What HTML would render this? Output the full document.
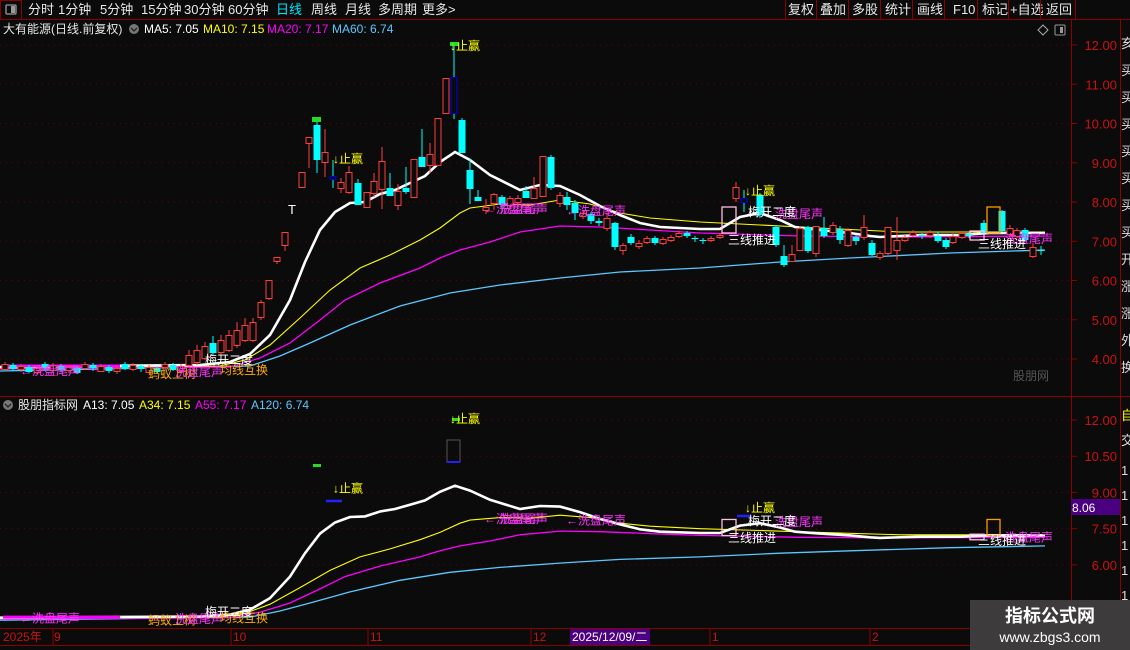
<!DOCTYPE html>
<html><head><meta charset="utf-8"><style>
*{margin:0;padding:0}
body{width:1130px;height:650px;background:#0b0b0b;overflow:hidden;font-family:"Liberation Sans","Noto Sans CJK SC",sans-serif;position:relative}
svg{position:absolute;left:0;top:0}
text{font-family:"Liberation Sans","Noto Sans CJK SC",sans-serif}
</style></head><body>
<svg id="s" width="1130" height="650" xmlns="http://www.w3.org/2000/svg">
<rect width="1130" height="650" fill="#0b0b0b"/>
<!-- toolbar -->
<g font-size="13" fill="#e8e8e8">
<rect x="0.5" y="0.5" width="21" height="19" fill="none" stroke="#8b0000"/>
<rect x="6" y="5" width="10" height="9" rx="1" fill="none" stroke="#999" stroke-width="1.3"/><rect x="11" y="6" width="4" height="7" fill="#999"/>
<text x="28" y="14">分时</text><text x="58" y="14">1分钟</text><text x="100" y="14">5分钟</text><text x="141" y="14">15分钟</text><text x="184" y="14">30分钟</text><text x="228" y="14">60分钟</text>
<text x="276" y="14" fill="#00e5ff">日线</text><text x="311" y="14">周线</text><text x="345" y="14">月线</text><text x="378" y="14">多周期</text><text x="422" y="14">更多&gt;</text>
<text x="788" y="14">复权</text><text x="820" y="14">叠加</text><text x="852" y="14">多股</text><text x="885" y="14">统计</text><text x="917" y="14">画线</text><text x="953" y="14">F10</text><text x="982" y="14">标记</text><text x="1010" y="14">+自选</text><text x="1046" y="14">返回</text>
</g>
<g stroke="#8b0000"><line x1="0" y1="19.5" x2="1130" y2="19.5"/>
<line x1="785.5" y1="0" x2="785.5" y2="19"/><line x1="816.5" y1="0" x2="816.5" y2="19"/><line x1="848.5" y1="0" x2="848.5" y2="19"/><line x1="880.5" y1="0" x2="880.5" y2="19"/><line x1="912.5" y1="0" x2="912.5" y2="19"/><line x1="944.5" y1="0" x2="944.5" y2="19"/><line x1="977.5" y1="0" x2="977.5" y2="19"/><line x1="1008.5" y1="0" x2="1008.5" y2="19"/><line x1="1040.5" y1="0" x2="1040.5" y2="19"/><line x1="1075.5" y1="0" x2="1075.5" y2="19"/>
<line x1="1071.5" y1="19" x2="1071.5" y2="645"/><line x1="1120.5" y1="19" x2="1120.5" y2="628"/>
<line x1="0" y1="396.5" x2="1130" y2="396.5"/><line x1="0" y1="628.5" x2="1130" y2="628.5"/><line x1="0" y1="645.5" x2="1130" y2="645.5"/>
</g>
<g id="grid"></g>
<g id="axis" font-size="13" fill="#cc1111" text-anchor="end"></g>
<!-- headers -->
<g font-size="12">
<text x="3" y="33" fill="#e8e8e8">大有能源(日线.前复权)</text>
<circle cx="134" cy="29" r="5" fill="#777"/><path d="M131 28l3 3 3-3" stroke="#222" fill="none" stroke-width="1.3"/>
<text x="144" y="33" fill="#fff">MA5: 7.05</text><text x="203" y="33" fill="#ffff00">MA10: 7.15</text><text x="267" y="33" fill="#ff00ff">MA20: 7.17</text><text x="332" y="33" fill="#5bc8ff">MA60: 6.74</text>
<circle cx="8" cy="405" r="5" fill="#777"/><path d="M5 404l3 3 3-3" stroke="#222" fill="none" stroke-width="1.3"/>
<text x="18" y="409" fill="#e8e8e8">股朋指标网</text>
<text x="83" y="409" fill="#fff">A13: 7.05</text><text x="139" y="409" fill="#ffff00">A34: 7.15</text><text x="195" y="409" fill="#ff00ff">A55: 7.17</text><text x="251" y="409" fill="#5bc8ff">A120: 6.74</text>
</g>
<path d="M1043 25l5 5-5 5-5-5z" fill="none" stroke="#aaa"/>
<rect x="1055" y="25" width="10" height="10" rx="1" fill="none" stroke="#999"/><rect x="1060" y="27" width="3" height="6" fill="#999"/>
<g id="lines" fill="none"></g>
<g id="cand"></g>
<g id="labels" font-size="12"></g>
<!-- 8.06 marker -->
<rect x="1071" y="499" width="49" height="16" fill="#4b0082"/><text x="1072" y="512" font-size="12" fill="#fff">8.06</text>
<!-- right column -->
<g font-size="13" fill="#ddd"><text x="1121" y="48">亥</text><text x="1121" y="75">买</text><text x="1121" y="102">买</text><text x="1121" y="129">买</text><text x="1121" y="156">买</text><text x="1121" y="183">买</text><text x="1121" y="210">买</text><text x="1121" y="237">买</text><text x="1121" y="264">开</text><text x="1121" y="291">涨</text><text x="1121" y="318">涨</text><text x="1121" y="345">外</text><text x="1121" y="372">换</text>
<text x="1121" y="420" fill="#ff0">自</text><text x="1121" y="445">交</text>
<text x="1121" y="475">1</text><text x="1121" y="500">1</text><text x="1121" y="525">1</text><text x="1121" y="550">1</text><text x="1121" y="575">1</text><text x="1121" y="600">1</text></g>
<!-- date axis -->
<g font-size="12" fill="#cc1111"><text x="3" y="641">2025年</text><text x="54" y="641">9</text><text x="233" y="641">10</text><text x="370" y="641">11</text><text x="533" y="641">12</text><text x="712" y="641">1</text><text x="872" y="641">2</text></g>
<g stroke="#8b0000"><line x1="53" y1="629" x2="53" y2="645"/><line x1="231" y1="629" x2="231" y2="645"/><line x1="368" y1="629" x2="368" y2="645"/><line x1="531" y1="629" x2="531" y2="645"/><line x1="710" y1="629" x2="710" y2="645"/><line x1="870" y1="629" x2="870" y2="645"/></g>
<rect x="570" y="629" width="80" height="16" fill="#4b0082"/><text x="572" y="641" font-size="12" fill="#fff">2025/12/09/二</text>
<!-- watermark -->
<rect x="970" y="600" width="160" height="50" fill="#3d3b3b"/>
<text x="1050" y="622" font-size="18" font-weight="bold" fill="#fff" text-anchor="middle">指标公式网</text>
<text x="1050" y="642" font-size="14" fill="#fff" text-anchor="middle">www.zbgs3.com</text>
</svg>
<script>
var NS="http://www.w3.org/2000/svg";
function el(p,t,a,txt){var e=document.createElementNS(NS,t);for(var k in a)e.setAttribute(k,a[k]);if(txt)e.textContent=txt;document.getElementById(p).appendChild(e);return e;}
function Y1(p){return 45+(12-p)*39.25;}
function Y2(p){return 420+(12-p)*24.15;}
function L(y){return 420+(y-45)*0.614;}
// grid + axis
for(var p=4;p<=12;p++){var y=Y1(p);el('grid','line',{x1:0,x2:1070,y1:y,y2:y,stroke:'#6a0000','stroke-dasharray':'1 5'});el('axis','text',{x:1117,y:y+5},p.toFixed(2));el('grid','line',{x1:1071,x2:1077,y1:y,y2:y,stroke:'#8b0000'});}
[12,10.5,9,7.5,6].forEach(function(p){var y=Y2(p);el('grid','line',{x1:0,x2:1070,y1:y,y2:y,stroke:'#6a0000','stroke-dasharray':'1 5'});el('axis','text',{x:1117,y:y+5},p.toFixed(2));el('grid','line',{x1:1071,x2:1077,y1:y,y2:y,stroke:'#8b0000'});});
// MA lines (upper px)
var W=[[0,367],[200,365],[230,362],[250,354],[270,335],[290,300],[305,262],[320,230],[335,212],[350,203],[365,202],[380,194],[395,190],[410,183],[425,176],[440,162],[455,152],[470,160],[490,175],[520,190],[540,185],[560,186],[580,195],[600,206],[620,215],[640,223],[660,227],[700,229],[720,229],[740,217],[760,213],[780,220],[795,227],[820,230],[850,233],[870,236],[880,237],[920,235],[960,235],[990,233],[1045,233]];
var Yl=[[0,368],[220,366],[245,360],[270,345],[300,318],[330,290],[360,268],[390,255],[420,240],[440,228],[460,213],[470,208],[500,204],[530,205],[560,200],[590,204],[620,213],[650,218],[700,222],[760,225],[820,228],[900,232],[1045,232]];
var Mg=[[0,369],[230,367],[260,358],[290,343],[320,320],[345,300],[380,283],[420,268],[440,258],[460,250],[490,242],[520,232],[560,226],[600,227],[650,230],[700,233],[800,236],[900,237],[1045,236]];
var Bl=[[0,371],[250,366],[280,356],[310,343],[350,325],[400,306],[450,293],[500,285],[560,278],[620,272],[700,268],[780,262],[850,258],[950,253],[1045,250]];
function pl(a,f){return a.map(function(q){return q[0]+','+(f?L(q[1]):q[1]).toFixed(1)}).join(' ');}
[[Bl,'#5bc8ff',1.3],[Mg,'#ff00ff',1.3],[Yl,'#ffff00',1.1],[W,'#ffffff',2.6]].forEach(function(m){el('lines','polyline',{points:pl(m[0]),stroke:m[1],'stroke-width':m[2]});el('lines','polyline',{points:pl(m[0],1),stroke:m[1],'stroke-width':m[2]});});
// candles [x, top, bottom, wickTop, wickBot, type] type r=red hollow c=cyan b=blue box
var C=[];
for(var x=5;x<185;x+=8){var t=364+((x*7)%5);C.push([x,t,t+3+(x%3),t-2,t+6,(x%16<8)?'r':'c']);}
C=C.concat([[189,355,365,350,367,'r'],[197,350,362,345,365,'r'],[205,346,358,342,360,'r'],[213,343,353,336,356,'c'],[221,340,352,335,355,'r'],[229,335,350,330,352,'r'],[237,330,345,322,348,'r'],[245,325,340,318,342,'r'],[253,322,340,318,342,'r'],[261,302,317,300,320,'r'],[269,280,298,280,300,'r'],[277,257,261,257,264,'r'],[285,232,245,232,251,'r'],[302,172,187,172,187,'r'],[309,137,143,137,168,'r'],[317,125,160,121,173,'c'],[325,152,162,129,177,'r'],[333,176,179,160,188,'b'],[341,182,188,178,193,'r'],[349,172,192,166,194,'r'],[358,183,205,179,205,'c'],[367,192,207,192,208,'r'],[374,181,193,173,197,'r'],[382,161,189,147,209,'r'],[390,188,196,173,196,'c'],[398,191,205,184,210,'r'],[406,188,192,167,194,'c'],[414,159,197,159,197,'r'],[422,157,167,129,167,'c'],[430,154,165,143,173,'r'],[438,118,165,118,165,'r'],[446,78,113,78,113,'r'],[454,77,113,44,119,'b'],[462,120,153,118,153,'c'],[470,170,189,159,204,'c'],[478,197,201,190,201,'c'],[486,207,210,199,214,'r'],[494,194,203,193,210,'r'],[502,197,205,195,210,'c'],[510,198,205,196,209,'r'],[518,198,202,195,205,'r'],[526,191,198,186,198,'c'],[534,188,198,177,198,'r'],[543,156,196,156,196,'r'],[551,157,188,155,190,'c'],[560,195,203,192,207,'r'],[567,197,205,192,210,'c'],[575,203,213,200,220,'c'],[583,213,216,210,219,'r'],[591,214,221,212,224,'c'],[599,221,223,218,226,'c'],[607,218,228,214,231,'r'],[615,223,247,222,250,'c'],[623,245,250,243,255,'r'],[631,237,243,234,245,'c'],[639,243,246,240,249,'r'],[647,238,242,236,244,'r'],[655,238,243,236,245,'c'],[663,239,243,237,245,'r'],[671,237,240,235,242,'r'],[679,233,236,231,238,'r'],[687,233,236,231,238,'c'],[695,238,239,236,242,'c'],[703,240,241,238,244,'c'],[711,238,240,236,242,'r'],[720,235,237,233,239,'r'],[736,187,198,182,202,'r'],[744,198,202,190,212,'b'],[760,195,215,193,218,'c'],[776,227,245,225,247,'c'],[784,256,265,245,267,'c'],[792,254,261,245,262,'r'],[800,228,250,226,250,'r'],[808,227,251,226,253,'c'],[816,226,253,226,257,'r'],[824,228,236,217,238,'c'],[833,225,232,222,235,'r'],[840,229,240,226,244,'c'],[848,230,245,228,247,'r'],[856,237,241,235,245,'c'],[864,227,237,215,240,'r'],[872,243,255,240,256,'c'],[880,253,257,251,260,'r'],[888,227,253,227,255,'r'],[897,240,250,217,260,'r'],[905,237,240,235,242,'r'],[913,232,235,230,237,'r'],[922,235,236,233,239,'c'],[930,232,235,230,238,'r'],[938,236,241,232,243,'c'],[946,240,247,238,249,'c'],[953,236,242,233,244,'r'],[962,233,237,231,239,'r'],[969,234,236,232,238,'c'],[984,223,233,220,236,'c'],[1002,211,231,210,232,'c'],[1010,228,234,225,238,'r'],[1017,230,236,228,238,'r'],[1025,230,240,228,242,'c'],[1033,247,256,243,258,'r'],[1041,250,251,246,255,'c']]);
C.forEach(function(c){var x=c[0],col=c[5]=='r'?'#ff3c3c':c[5]=='c'?'#00ffff':'#0000dd';
el('cand','line',{x1:x,x2:x,y1:c[3],y2:c[4],stroke:c[5]=='b'?'#00ffff':col,'stroke-width':1});
var h=Math.max(c[2]-c[1],1);
if(c[5]=='c')el('cand','rect',{x:x-3.5,y:c[1],width:7,height:h,fill:col});
else el('cand','rect',{x:x-3,y:c[1]+.5,width:6,height:h,fill:'#0b0b0b',stroke:col,'stroke-width':1});});
el('cand','rect',{x:312,y:117,width:9,height:5,fill:'#22dd22'});
el('cand','rect',{x:450,y:42,width:9,height:4,fill:'#22dd22'});
el('cand','text',{x:288,y:214,fill:'#fff','font-size':'13'},'T');
// boxes
[[722,207,14,26,'#ffc0e0'],[970,231,14,9,'#ffc0e0'],[987,207,13,26,'#ff9900']].forEach(function(b){el('cand','rect',{x:b[0],y:b[1],width:b[2],height:b[3],fill:'none',stroke:b[4],'stroke-width':1.3});el('cand','rect',{x:b[0],y:L(b[1]),width:b[2],height:b[3]*0.62,fill:'none',stroke:b[4],'stroke-width':1.3});});
// lower panel marks
el('cand','rect',{x:447,y:440,width:13,height:22,fill:'none',stroke:'#555'});el('cand','line',{x1:447,x2:460,y1:462,y2:462,stroke:'#2222ff','stroke-width':2});
el('cand','rect',{x:313,y:464,width:8,height:3,fill:'#22dd22'});el('cand','rect',{x:452,y:418,width:8,height:3,fill:'#22dd22'});
el('cand','line',{x1:326,x2:342,y1:501,y2:501,stroke:'#2222ff','stroke-width':2.5});el('cand','line',{x1:737,x2:752,y1:516,y2:516,stroke:'#2222ff','stroke-width':2.5});
// labels
function T(x,y,c,s,f){el('labels','text',{x:x,y:y,fill:c,'font-size':f||12},s);}
[0,1].forEach(function(k){function y(v){return k?L(v):v;}
T(450,y(50),'#ffff00','↓止赢');T(333,y(163),'#ffff00','↓止赢');T(745,y(195),'#ffff00','↓止赢');
T(484,y(213),'#ff33ff','←洗盘尾声');T(500,y(213),'#ff33ff','洗盘尾声');T(566,y(215),'#ff33ff','←洗盘尾声');T(775,y(218),'#ff33ff','洗盘尾声');T(1005,y(243),'#ff33ff','洗盘尾声');
T(748,y(216),'#ffffff','梅开二度');T(728,y(244),'#ffffff','三线推进');T(978,y(248),'#ffffff','三线推进');
T(20,y(375),'#ff33ff','←洗盘尾声');T(148,y(378),'#ffaa00','蚂蚁上树');T(175,y(376),'#ff33ff','洗盘尾声');T(220,y(374),'#ffaa00','均线互换');T(205,y(364),'#ffffff','梅开二度');
});
T(1013,380,'#555555','股朋网');
// left strips near flat
el('lines','line',{x1:3,x2:120,y1:366,y2:366,stroke:'#ff00ff','stroke-width':3});el('lines','line',{x1:3,x2:120,y1:L(366),y2:L(366),stroke:'#ff00ff','stroke-width':3});
</script>
</body></html>
